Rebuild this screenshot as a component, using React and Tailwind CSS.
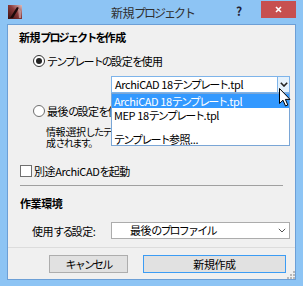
import React from "react";

const AppIcon = () => (
  <svg width="14" height="14" viewBox="0 0 14 14">
    <defs>
      <linearGradient id="ic" x1="0" y1="1" x2="1" y2="0">
        <stop offset="0" stopColor="#3a1010" />
        <stop offset="0.55" stopColor="#8a3a3a" />
        <stop offset="1" stopColor="#e0c0c0" />
      </linearGradient>
    </defs>
    <rect x="0" y="0" width="14" height="14" fill="url(#ic)" />
    <path d="M2 13 L9 2 L11 3 L5 13 Z" fill="#1a0a0a" />
    <path d="M10 3 L13 6 L13 13 L11 13 Z" fill="#c89a9a" opacity="0.8" />
  </svg>
);

const Cursor = () => (
  <svg width="12" height="19" viewBox="0 0 12 19">
    <path
      d="M0.5 0.5 L0.5 15.5 L4 12.2 L6.5 18 L8.8 17 L6.4 11.4 L11 11.4 Z"
      fill="#fff"
      stroke="#000"
      strokeWidth="1"
      strokeLinejoin="miter"
    />
  </svg>
);

const Chevron = ({ color = "#222", bold }) => (
  <svg width="8" height="5" viewBox="0 0 8 5">
    <path
      d="M0.8 0.8 L4 4 L7.2 0.8"
      fill="none"
      stroke={color}
      strokeWidth={bold ? 1.6 : 1}
    />
  </svg>
);

const Grip = () => (
  <svg width="8" height="8" viewBox="0 0 8 8">
    {[
      [6, 0],
      [3, 3],
      [6, 3],
      [0, 6],
      [3, 6],
      [6, 6],
    ].map(([x, y]) => (
      <rect key={`${x}-${y}`} x={x} y={y} width="2" height="2" fill="#b8b8b8" />
    ))}
  </svg>
);

// 欧文・漢字は字間を詰めすぎない（かなだけ詰める）
const Lat = ({ children }) => <span className="tracking-[-0.4px]">{children}</span>;
const K = ({ children }) => <span className="tracking-[-0.4px]">{children}</span>;

const App = () => {
  return (
    <div className="w-[303px] h-[286px] bg-[#8dc4f4] flex flex-col text-black font-['Noto_Sans_CJK_JP','Noto_Sans',sans-serif] overflow-hidden">
      {/* タイトルバー */}
      <div className="h-[24px] grid grid-cols-[1fr_auto_1fr] items-start">
        <div className="pl-[8px] pt-[5px]">
          <AppIcon />
        </div>
        <div className="pt-[4px] pl-[2px] text-[12px] leading-[17px] tracking-[-2px] text-[#2f2f2f]">
          <K>新規</K>プロジェクト
        </div>
        <div className="flex justify-end pr-[7px] pt-[1px]">
          <div className="w-[14px] pt-[3px] text-[12px] leading-[14px] font-bold text-[#223]">?</div>
          <div className="ml-[11px] w-[35px] h-[17px] bg-[#c75050] flex items-center justify-center">
            <svg width="7" height="7" viewBox="0 0 7 7">
              <path d="M1 1 L6 6 M6 1 L1 6" stroke="#fff" strokeWidth="1.6" />
            </svg>
          </div>
        </div>
      </div>

      {/* クライアント領域 */}
      <div className="relative flex-1 mx-[7px] mb-[6px] bg-[#f0f0f0] border border-[#6c9fd6] flex flex-col text-[11px] leading-[14px] tracking-[-1.8px]">
        <div className="mt-[5px] pl-[11px] font-bold">
          <K>新規</K>プロジェクトを<K>作成</K>
        </div>

        <div className="mt-[10px] pl-[25px] flex items-center gap-[2px]">
          <span className="w-[12px] h-[12px] rounded-full border border-[#333] bg-white flex items-center justify-center">
            <span className="w-[6px] h-[6px] rounded-full bg-[#222]" />
          </span>
          <span>
            テンプレートの<K>設定</K>を<K>使用</K>
          </span>
        </div>

        <div className="mt-[8px] pl-[103px]">
          <div className="relative w-[179px] h-[17px] bg-white border border-[#7eb4ea] flex z-10">
            <div className="flex-1 pl-[3px] leading-[15px] whitespace-nowrap">
              <Lat>ArchiCAD 18</Lat>テンプレート<Lat>.tpl</Lat>
            </div>
            <div className="w-[12px] bg-[#e5f1fb] border-l border-[#7eb4ea] flex items-center justify-center">
              <Chevron bold />
            </div>

            {/* ドロップダウンリスト */}
            <div className="absolute left-[-1px] top-[16px] w-[179px] h-[53px] bg-white border border-[#7aa6d6] flex flex-col">
              <div className="h-[14px] bg-[#3399ff] text-white pl-[2px] leading-[14px] whitespace-nowrap">
                <Lat>ArchiCAD 18</Lat>テンプレート<Lat>.tpl</Lat>
              </div>
              <div className="h-[14px] pl-[2px] leading-[14px] whitespace-nowrap">
                <Lat>MEP 18</Lat>テンプレート<Lat>.tpl</Lat>
              </div>
              <div className="mt-[5px] mx-[3px] h-px bg-[#c8c8c8]" />
              <div className="mt-[5px] pl-[2px] leading-[14px]">
                テンプレート<K>参照</K>
                <Lat>...</Lat>
              </div>
            </div>

            <div className="absolute left-[167px] top-[11px] z-20">
              <Cursor />
            </div>
          </div>
        </div>

        <div className="mt-[11px] pl-[25px] flex items-center gap-[2px]">
          <span className="w-[12px] h-[12px] rounded-full border border-[#6f6f6f] bg-white" />
          <span>
            <K>最後</K>の<K>設定</K>を<K>使用</K>
          </span>
        </div>

        <div className="mt-[8px] pl-[38px] pr-[8px] text-[10px] leading-[11px] tracking-[-1.6px]">
          <div className="whitespace-nowrap">
            <K>情報</K>:<K>選択</K>したテンプレートから<K>新規</K>プロジェクトが<K>作</K>
          </div>
          <div>
            <K>成</K>されます。
          </div>
        </div>

        <div className="mt-[16px] pl-[12px] flex items-center gap-[2px]">
          <span className="w-[12px] h-[12px] border border-[#707070] bg-white" />
          <span>
            <K>別途</K>
            <Lat>ArchiCAD</Lat>を<K>起動</K>
          </span>
        </div>

        <div className="mt-[7px] ml-[12px] w-[263px] h-px bg-[#a0a0a0]" />

        <div className="mt-[10px] pl-[12px] font-bold">
          <K>作業環境</K>
        </div>

        <div className="mt-[12px] flex items-center">
          <div className="w-[103px] pl-[24px]">
            <K>使用</K>する<K>設定</K>:
          </div>
          <div className="w-[179px] h-[17px] bg-white border border-[#acacac] flex items-center">
            <div className="flex-1 pl-[18px] leading-[15px]">
              <K>最後</K>のプロファイル
            </div>
            <div className="pr-[3px] flex items-center">
              <Chevron color="#555" />
            </div>
          </div>
        </div>

        <div className="mt-[8px] border-t border-[#dcdcdc] pt-[7px] pb-[6px] pl-[41px] flex gap-[15px]">
          <button className="w-[79px] h-[18px] bg-[#e1e1e1] border border-[#adadad] text-[11px] leading-[16px] tracking-[-1.8px]">
            キャンセル
          </button>
          <button className="w-[143px] h-[18px] bg-[#e1e1e1] border border-[#3c9cf4] text-[11px] leading-[16px] tracking-[-0.4px]">
            新規作成
          </button>
        </div>

        <div className="absolute right-[0px] bottom-[0px]">
          <Grip />
        </div>
      </div>
    </div>
  );
};

export default App;
